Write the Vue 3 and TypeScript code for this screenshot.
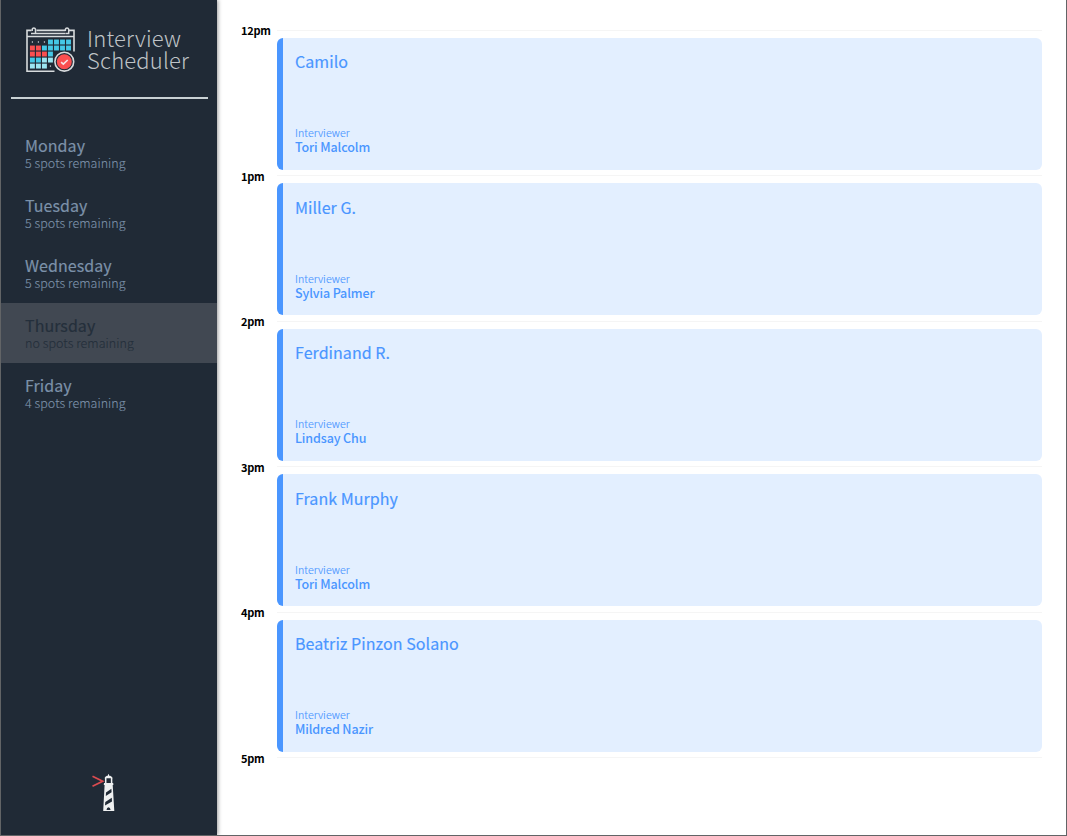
<script setup lang="ts">
interface Day {
  name: string
  spots: string
  full?: boolean
}
interface Appointment {
  time: string
  student: string
  interviewer: string
}

const days: Day[] = [
  { name: 'Monday', spots: '5 spots remaining' },
  { name: 'Tuesday', spots: '5 spots remaining' },
  { name: 'Wednesday', spots: '5 spots remaining' },
  { name: 'Thursday', spots: 'no spots remaining', full: true },
  { name: 'Friday', spots: '4 spots remaining' },
]

const appointments: Appointment[] = [
  { time: '12pm', student: 'Camilo', interviewer: 'Tori Malcolm' },
  { time: '1pm', student: 'Miller G.', interviewer: 'Sylvia Palmer' },
  { time: '2pm', student: 'Ferdinand R.', interviewer: 'Lindsay Chu' },
  { time: '3pm', student: 'Frank Murphy', interviewer: 'Tori Malcolm' },
  { time: '4pm', student: 'Beatriz Pinzon Solano', interviewer: 'Mildred Nazir' },
]

// Calendar cells, row by row: d = dot, c = cyan, r = red, l = light cyan
const rows = ['dddcccc', 'rrccccc', 'rrrc', 'ccll', 'llld']
const fills: Record<string, string> = { c: '#45c8e6', r: '#fa4f50', l: '#9be6f2', d: '#dfe3e6' }
const cells = rows.flatMap((row, y) =>
  [...row].map((kind, x) => {
    const size = kind === 'd' ? 1.2 : 4.9
    return { x: 32.4 + x * 6.02 - size / 2, y: 42 + y * 6.02 - size / 2, size, fill: fills[kind] }
  }),
)
</script>

<template>
  <main class="layout">
    <section class="sidebar">
      <header class="brand">
        <svg class="calendar" width="54" height="52" viewBox="24 24 54 52">
          <path d="M74 51.5V30.4H69M65.5 30.4H36.5M31.5 30.4H27V71.3H54.5" fill="none" stroke="#d7dbdd" stroke-width="1.6" />
          <path d="M27 36.6H74" stroke="#d7dbdd" stroke-width="1.5" />
          <path d="M31 33.4H35.5V29.2a1.7 1.7 0 0 0-3.3 0V31M36 33.4H65M65.3 33.4H68.7V29.2a1.7 1.7 0 0 0-3.3 0V31" fill="none" stroke="#d7dbdd" stroke-width="1.5" />
          <rect v-for="(c, i) in cells" :key="i" :x="c.x" :y="c.y" :width="c.size" :height="c.size" :fill="c.fill" />
          <circle cx="64.3" cy="61.7" r="10.8" fill="#202a36" />
          <circle cx="64.3" cy="61.7" r="9.4" fill="#202a36" stroke="#d7dbdd" stroke-width="1.6" />
          <circle cx="64.3" cy="61.7" r="7.5" fill="#fa4f50" />
          <path d="M61.1 62.2L63.3 64.2L67.7 60" fill="none" stroke="#f6e4e6" stroke-width="1.6" />
        </svg>
        <h1 class="wordmark"><div>Interview</div><div>Scheduler</div></h1>
      </header>
      <div class="rule"></div>
      <ul class="days">
        <li v-for="d in days" :key="d.name" class="day" :class="{ full: d.full }">
          <h2>{{ d.name }}</h2>
          <p>{{ d.spots }}</p>
        </li>
      </ul>
      <svg class="lighthouse" width="30" height="42" viewBox="88 772 30 42">
        <path d="M92.5 776.3L102.6 781.2L92.5 786.2" fill="none" stroke="#d94b50" stroke-width="1.8" />
        <path d="M104.6 778.2Q105 775.9 108.5 775.4Q112.2 775.9 112.6 778.2Z" fill="#eef0f1" />
        <path d="M108.5 774.3V776" stroke="#eef0f1" />
        <path d="M105.7 778V783.3M111.6 778V783.3" stroke="#eef0f1" stroke-width="1.5" />
        <path d="M104 783H113.2L113.4 785H112.7L114.3 811H103.2L104.6 785H103.8Z" fill="#eef0f1" />
        <path d="M106 792.4L111.4 788.8L111.6 792.3L105.8 796ZM105.3 801.9L111.8 797.8L112 801.4L105 805.4ZM106.5 810Q106.8 807.3 108.5 807.3Q110.3 807.3 110.6 810Z" fill="#202a36" />
      </svg>
    </section>

    <section class="schedule">
      <article v-for="a in appointments" :key="a.time" class="slot">
        <header class="hour"><h4>{{ a.time }}</h4><hr /></header>
        <div class="card">
          <h3>{{ a.student }}</h3>
          <div class="who">
            <h5>Interviewer</h5>
            <p>{{ a.interviewer }}</p>
          </div>
        </div>
      </article>
      <header class="hour"><h4>5pm</h4><hr /></header>
    </section>
  </main>
</template>

<style>
body {
  margin: 0;
}
</style>

<style scoped>
.layout {
  box-sizing: border-box;
  display: flex;
  width: 1067px;
  height: 836px;
  overflow: hidden;
  border: solid #626466;
  border-width: 0 1px 1px;
  background: #fff;
  font-family: "Noto Sans CJK SC", "Noto Sans CJK JP", sans-serif;
}
h1, h2, h3, h4, h5, p, ul, hr {
  margin: 0;
  padding: 0;
  font-weight: 400;
}
.sidebar {
  box-sizing: border-box;
  display: flex;
  flex-direction: column;
  flex: none;
  width: 216px;
  height: 835px;
  padding-bottom: 21px;
  background: #202a36;
  box-shadow: 1px 0 4px rgba(0, 0, 0, 0.4);
}
.brand {
  display: flex;
  height: 97px;
}
.calendar {
  margin: 24px 0 0 23px;
}
.wordmark {
  margin: 26px 0 0 9px;
  color: #bfc3c7;
  font-size: 22px;
  font-weight: 300;
  letter-spacing: 0.2px;
  line-height: 22px;
}
.rule {
  height: 2px;
  margin: 0 9px 0 10px;
  background: #c9d1d4;
}
.days {
  list-style: none;
  margin-top: 24px;
}
.day {
  box-sizing: border-box;
  height: 60px;
  padding: 12px 0 0 24px;
  color: #7c91a9;
}
.day h2 {
  font-size: 16px;
  line-height: 20px;
  letter-spacing: 0.05px;
  -webkit-text-stroke: 0.18px currentColor;
}
.day p {
  font-size: 12.5px;
  line-height: 15px;
  font-weight: 300;
  letter-spacing: 0.05px;
  -webkit-text-stroke: 0.12px currentColor;
}
.day.full {
  background: #414852;
  color: #242f3b;
}
.lighthouse {
  margin: auto 0 0 87px;
}
.schedule {
  flex: 1;
  padding: 23px 24px 0;
}
.slot {
  height: 145.5px;
}
.hour {
  display: flex;
  align-items: center;
  height: 14.5px;
}
.hour h4 {
  flex: none;
  width: 36px;
  font-size: 11px;
  line-height: 14px;
  font-weight: 700;
  letter-spacing: -0.3px;
  color: #000;
}
.hour hr {
  flex: 1;
  height: 1px;
  border: 0;
  background: #f5f5f5;
}
.card {
  box-sizing: border-box;
  display: flex;
  flex-direction: column;
  justify-content: space-between;
  height: 132px;
  padding: 11.5px 12px 15.5px;
  border-left: 6px solid #4a96ff;
  border-radius: 6px;
  background: #e3efff;
  color: #4a96ff;
  margin-left: 36px;
}
.card h3 {
  font-size: 16px;
  line-height: 24px;
  letter-spacing: 0.05px;
  -webkit-text-stroke: 0.18px currentColor;
}
.who h5 {
  font-size: 10.6px;
  line-height: 14px;
  font-weight: 300;
  letter-spacing: 0.05px;
  -webkit-text-stroke: 0.15px currentColor;
}
.who p {
  font-size: 12.5px;
  line-height: 14px;
  font-weight: 500;
  letter-spacing: -0.12px;
}
</style>
